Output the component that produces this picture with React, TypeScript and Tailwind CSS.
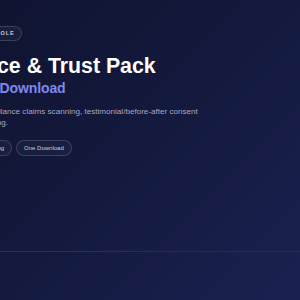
export default function App() {
  const tags = ["Claim Scan", "Consent Logging", "One Download"];

  return (
    <div className="min-h-screen w-full overflow-hidden bg-gradient-to-br from-[#101431] via-[#141a3e] to-[#1a2151] font-['Liberation_Sans',Arial,sans-serif]">
      <section className="h-[252px] border-b border-[#262d58]">
        <div className="-ml-[100px] w-[330px] pt-[26px]">
          <div className="flex">
            <span className="inline-flex h-[15px] items-center rounded-full border border-white/15 bg-white/[0.04] px-[7px] text-[5.5px] font-semibold uppercase tracking-[0.15em] text-[#c4c7de]">
              Pack · Compliance Console
            </span>
          </div>
          <h1 className="mt-[13px] text-[21.3px] font-bold leading-[24px] text-white">
            Compliance &amp; Trust Pack
          </h1>
          <p className="mt-[1px] text-[14px] font-bold leading-[18px] tracking-[-0.008em] text-[#7f88ee]">
            Launch in One Download
          </p>
          <p className="mt-[9px] max-w-[312px] text-[8.1px] leading-[11px] text-[#a3a8c4]">
            It includes automated compliance claims scanning, testimonial/before-after consent
            tracking with full audit logging.
          </p>
          <div className="mt-[12px] flex gap-[4px]">
            {tags.map((tag) => (
              <span
                key={tag}
                className="inline-flex h-[16px] items-center rounded-full border border-white/15 bg-white/[0.03] px-[7px] text-[6px] text-[#c9cce2]"
              >
                {tag}
              </span>
            ))}
          </div>
        </div>
      </section>
    </div>
  );
}
